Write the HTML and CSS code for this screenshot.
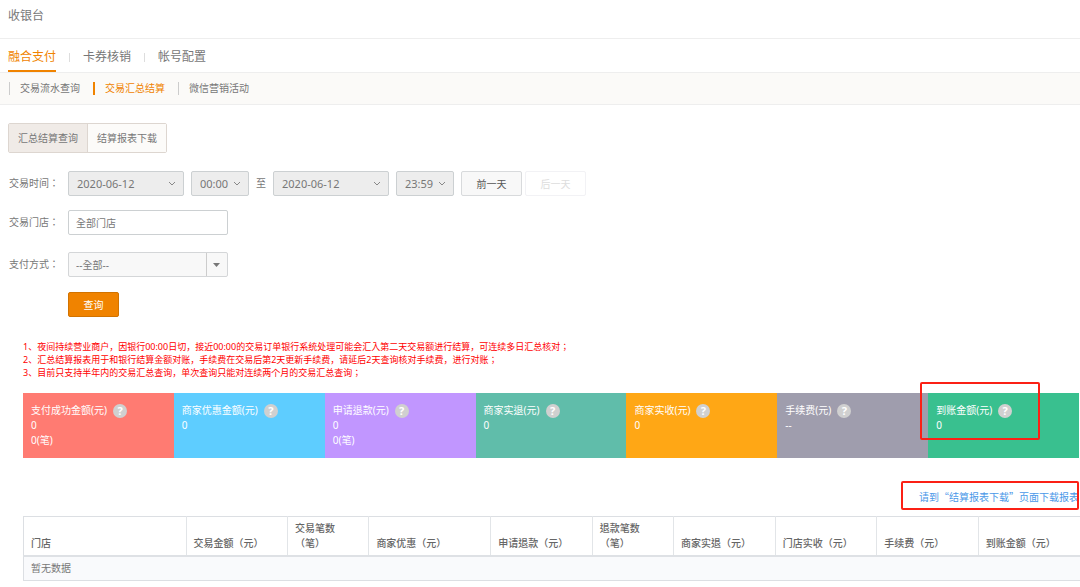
FILE: index.html
```html
<!DOCTYPE html>
<html>
  <head>
    <meta charset="UTF-8" />
    <title>收银台</title>
    <link rel="stylesheet" href="styles.css">
  </head>
  <body>
    <h1 class="page-title">收银台</h1>
    <nav class="tabs">
      <a href="#" class="tab active">融合支付</a>
      <a href="#" class="tab">卡券核销</a>
      <a href="#" class="tab">帐号配置</a>
    </nav>
    <nav class="sub-tabs">
      <a href="#" class="sub-tab">交易流水查询</a>
      <a href="#" class="sub-tab active">交易汇总结算</a>
      <a href="#" class="sub-tab">微信营销活动</a>
    </nav>

    <div class="switch">
      <button type="button" class="switch-item active">汇总结算查询</button>
      <button type="button" class="switch-item">结算报表下载</button>
    </div>

    <form class="filter">
      <div class="row row-time">
        <label class="label" for="startDate">交易时间：</label>
        <div class="times">
          <select id="startDate" class="picker date"><option>2020-06-12</option></select>
          <select class="picker time" aria-label="开始时间"><option>00:00</option></select>
          <span class="to">至</span>
          <select class="picker date" aria-label="结束日期"><option>2020-06-12</option></select>
          <select class="picker time" aria-label="结束时间"><option>23:59</option></select>
          <div class="days">
            <button type="button" class="day">前一天</button>
            <button type="button" class="day" disabled>后一天</button>
          </div>
        </div>
      </div>
      <div class="row row-store">
        <label class="label" for="store">交易门店：</label>
        <input id="store" class="field" type="text" value="全部门店">
      </div>
      <div class="row">
        <label class="label" for="payType">支付方式：</label>
        <select id="payType" class="field pay"><option>--全部--</option></select>
      </div>
      <div class="row">
        <span class="label"></span>
        <button type="button" class="query">查询</button>
      </div>
    </form>

    <div class="result">
      <div class="notes">
        <p>1、夜间持续营业商户，因银行00:00日切，接近00:00的交易订单银行系统处理可能会汇入第二天交易额进行结算，可连续多日汇总核对；</p>
        <p>2、汇总结算报表用于和银行结算金额对账，手续费在交易后第2天更新手续费，请延后2天查询核对手续费，进行对账；</p>
        <p>3、目前只支持半年内的交易汇总查询，单次查询只能对连续两个月的交易汇总查询；</p>
      </div>

      <div class="cards">
        <div class="card red">
          <div class="card-title">支付成功金额(元)<span class="help">?</span></div>
          <div>0</div>
          <div>0(笔)</div>
        </div>
        <div class="card blue">
          <div class="card-title">商家优惠金额(元)<span class="help">?</span></div>
          <div>0</div>
        </div>
        <div class="card purple">
          <div class="card-title">申请退款(元)<span class="help">?</span></div>
          <div>0</div>
          <div>0(笔)</div>
        </div>
        <div class="card teal">
          <div class="card-title">商家实退(元)<span class="help">?</span></div>
          <div>0</div>
        </div>
        <div class="card orange">
          <div class="card-title">商家实收(元)<span class="help">?</span></div>
          <div>0</div>
        </div>
        <div class="card gray">
          <div class="card-title">手续费(元)<span class="help">?</span></div>
          <div>--</div>
        </div>
        <div class="card green">
          <div class="card-title">到账金额(元)<span class="help">?</span></div>
          <div>0</div>
          <span class="mark mark-card"></span>
        </div>
      </div>

      <div class="download">
        <a href="#" class="download-link">请到“结算报表下载”页面下载报表</a>
        <span class="mark mark-link"></span>
      </div>

      <table class="data-table">
        <colgroup>
          <col class="w8"><col class="w5"><col class="w4"><col class="w6"><col class="w5">
          <col class="w4"><col class="w5"><col class="w5"><col class="w5"><col class="w5">
        </colgroup>
        <thead>
          <tr>
            <th>门店</th>
            <th>交易金额（元）</th>
            <th>交易笔数<br>（笔）</th>
            <th>商家优惠（元）</th>
            <th>申请退款（元）</th>
            <th>退款笔数<br>（笔）</th>
            <th>商家实退（元）</th>
            <th>门店实收（元）</th>
            <th>手续费（元）</th>
            <th>到账金额（元）</th>
          </tr>
        </thead>
        <tbody>
          <tr>
            <td colspan="10">暂无数据</td>
          </tr>
        </tbody>
      </table>
    </div>
  </body>
</html>
```

FILE: styles.css
```css
* {
  box-sizing: border-box;
}
body {
  margin: 0;
  font-family: "Noto Sans", "Noto Sans CJK TC", sans-serif;
  font-size: 10px;
  line-height: 15px;
  color: #777;
  background-color: #fff;
}
a {
  color: inherit;
  text-decoration: none;
}
button,
input,
select {
  font-family: inherit;
  font-size: 10px;
  color: inherit;
  margin: 0;
}
.page-title {
  margin: 0;
  padding: 8px;
  font-size: 12px;
  font-weight: normal;
  line-height: 16px;
  height: 39px;
  border-bottom: 1px solid #eee;
}
.tabs {
  display: flex;
  padding: 0 8px;
  border-bottom: 1px solid #eee;
}
.tab {
  display: flex;
  align-items: center;
  font-size: 12px;
  line-height: 16px;
  padding: 10px 0 5px;
  border-bottom: 2px solid transparent;
}
.tab + .tab::before {
  content: "";
  height: 9px;
  margin: 0 13px;
  border-left: 1px solid #ddd;
}
.tab.active {
  color: #f08300;
  border-bottom-color: #f08300;
}
.sub-tabs {
  display: flex;
  gap: 13px;
  padding: 9px;
  background-color: #fbfaf8;
  border-bottom: 1px solid #eee;
}
.sub-tab {
  line-height: 13px;
  padding-left: 10px;
  border-left: 1px solid #ccc;
}
.sub-tab.active {
  color: #f08300;
  border-left: 2px solid #f08300;
}
.switch {
  display: flex;
  width: max-content;
  margin: 18px 8px;
  border: 1px solid #ddd6d0;
  border-radius: 2px;
}
.switch-item {
  height: 28px;
  padding: 0 9px 1px;
  border: none;
  background-color: #fcfbf9;
  cursor: pointer;
}
.switch-item.active {
  background-color: #f0ebe7;
}
.switch-item + .switch-item {
  border-left: 1px solid #ddd6d0;
}
.row {
  display: flex;
  align-items: center;
  margin-bottom: 15px;
}
.row-time {
  margin-bottom: 14px;
}
.row-store {
  margin-bottom: 17px;
}
.label {
  width: 68px;
  padding-left: 9px;
  flex-shrink: 0;
}
.times {
  display: flex;
  align-items: center;
  gap: 7px;
}
.picker {
  appearance: none;
  height: 25px;
  padding: 0 8px 1px;
  font-size: 11px;
  border: 1px solid #ccd0d2;
  border-radius: 2px;
  background: #ededed url("data:image/svg+xml,%3Csvg xmlns='http://www.w3.org/2000/svg' width='8' height='6' fill='none' stroke='%23888'%3E%3Cpath d='M1 1l3 3 3-3'/%3E%3C/svg%3E") no-repeat right 7px center;
}
.date {
  width: 116px;
}
.time {
  width: 58px;
}
.days {
  display: flex;
  gap: 3px;
}
.day {
  width: 61px;
  height: 25px;
  padding: 0;
  border: 1px solid #d8dadc;
  border-radius: 2px;
  background-color: #f8f8f8;
  color: #555;
  cursor: pointer;
}
.day:disabled {
  color: #ddd;
  border-color: #f2f2f5;
  background-color: #fff;
}
.field {
  width: 160px;
  height: 25px;
  padding: 0 7px;
  border: 1px solid #ccd0d2;
  border-radius: 2px;
  background-color: #fff;
}
.pay {
  appearance: none;
  border-color: #d4d6d8;
  background: #f8f8f8 url("data:image/svg+xml,%3Csvg xmlns='http://www.w3.org/2000/svg' width='21' height='23'%3E%3Cpath d='M.5 0v23' stroke='%23ccc'/%3E%3Cpath d='M7 10h7l-3.500 4z' fill='%23777'/%3E%3C/svg%3E") no-repeat right center;
}
.query {
  width: 51px;
  height: 25px;
  padding: 0;
  border: 1px solid #d27300;
  border-radius: 2px;
  background-color: #f08300;
  color: #fff;
  cursor: pointer;
}
.result {
  padding-left: 23px;
  overflow: hidden;
}
.notes {
  margin: 8px 0 14px;
  font-family: "Noto Sans", "Noto Sans CJK JP", sans-serif;
  font-size: 9px;
  line-height: 13px;
  color: #f00;
}
.notes p {
  margin: 0;
}
.cards {
  display: flex;
  margin-right: 1px;
}
.card {
  position: relative;
  flex: 1;
  height: 65px;
  padding: 10px 8px;
  color: #fff;
}
.card-title {
  display: flex;
  align-items: center;
  gap: 6px;
}
.help {
  width: 14px;
  height: 14px;
  border-radius: 50%;
  background-color: #d0d0d0;
  font-size: 11px;
  font-weight: bold;
  line-height: 14px;
  text-align: center;
}
.red {
  background-color: #ff7b72;
}
.blue {
  background-color: #5ecdff;
}
.purple {
  background-color: #c196ff;
}
.teal {
  background-color: #60bdaa;
}
.orange {
  background-color: #ffa715;
}
.gray {
  background-color: #9f9dad;
}
.green {
  background-color: #39c08f;
}
.mark {
  position: absolute;
  border: 2px solid #fb2015;
  border-radius: 2px;
  pointer-events: none;
}
.mark-card {
  top: -11px;
  left: -8px;
  width: 120px;
  height: 58px;
}
.download {
  position: relative;
  width: max-content;
  margin: 23px 1px 6px auto;
  padding: 8px 0 5px 18px;
}
.download-link {
  font-family: "Noto Sans CJK TC", sans-serif;
  color: #4a98e8;
}
.mark-link {
  inset: 0;
}
.data-table {
  width: 100%;
  table-layout: fixed;
  border-collapse: collapse;
  border: 1px solid #dcdfe3;
  border-right: none;
}
.data-table th,
.data-table td {
  padding: 4px 7px;
  text-align: left;
}
.data-table th {
  font-weight: 500;
  line-height: 15px;
  vertical-align: bottom;
  white-space: nowrap;
  color: #666;
  border-right: 1px solid #e2e5e8;
  border-bottom: 2px solid #dee1e5;
}
.data-table th:last-child {
  border-right: none;
}
.data-table td {
  background-color: #f9fafc;
}
.w8 {
  width: 160px;
}
.w6 {
  width: 120px;
}
.w5 {
  width: 100px;
}
.w4 {
  width: 80px;
}
```
